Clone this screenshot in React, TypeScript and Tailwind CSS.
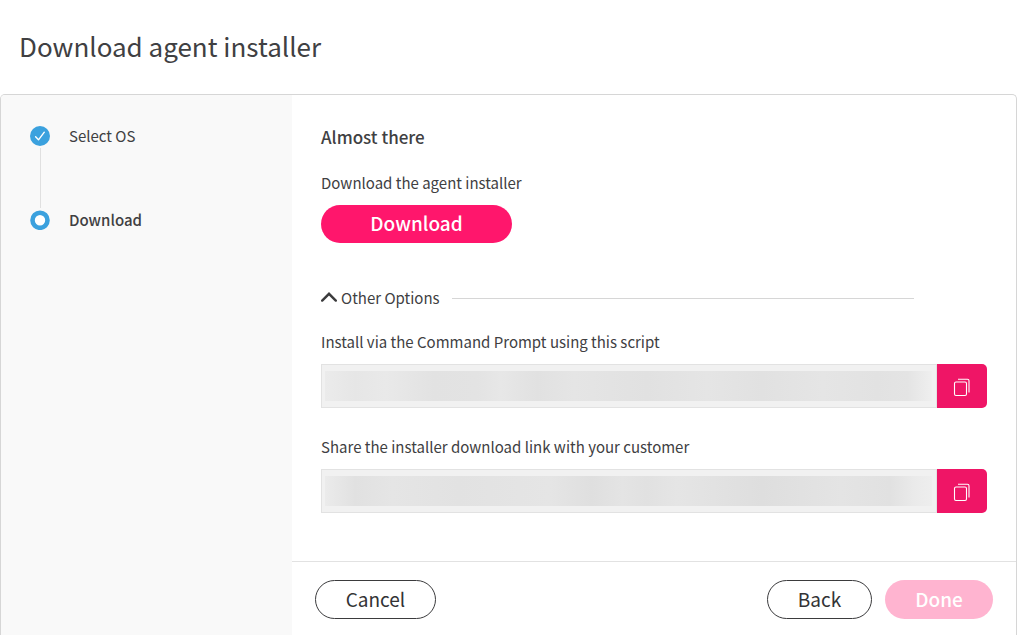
import { useId, useState } from "react";

function CheckBadge() {
  return (
    <svg viewBox="0 0 20 20" className="size-5 shrink-0" aria-hidden="true">
      <circle cx="10" cy="10" r="10" fill="#3ba1de" />
      <path d="M5.6 10.8 8.5 13.8 14.3 6.2" fill="none" stroke="#fff" strokeWidth="1.4" strokeLinecap="round" strokeLinejoin="round" />
    </svg>
  );
}

function CurrentBadge() {
  return (
    <svg viewBox="0 0 20 20" className="size-5 shrink-0" aria-hidden="true">
      <circle cx="10" cy="10.3" r="7.5" fill="#fff" stroke="#3ba1de" strokeWidth="4.6" />
    </svg>
  );
}

function CopyIcon() {
  return (
    <svg viewBox="0 0 18 20" className="h-5 w-[18px]" fill="none" stroke="#fff" aria-hidden="true">
      <rect x="1.5" y="5" width="12" height="13.5" rx="1.5" strokeWidth="1.1" />
      <path d="M5 2.2h9.5a1.5 1.5 0 0 1 1.5 1.5V15.5" strokeWidth="1.1" />
    </svg>
  );
}

function CopyField({ label, fill }: { label: string; fill: string }) {
  const id = useId();
  return (
    <div>
      <label htmlFor={id} className="block leading-6">
        {label}
      </label>
      <div className="mt-[10px] flex h-11">
        <div className="flex min-w-0 flex-1 items-center border border-[#e2e2e2] bg-[#f1f1f1] pr-1 pl-[3px]">
          <input id={id} readOnly className={`h-[30px] w-full outline-none ${fill}`} />
        </div>
        <button type="button" aria-label="Copy" className="flex w-[50px] items-center justify-center rounded-r-[5px] bg-[#ef1566] pt-[2px]">
          <CopyIcon />
        </button>
      </div>
    </div>
  );
}

export default function App() {
  const [open, setOpen] = useState(true);
  return (
    <div className="flex min-h-screen flex-col bg-white font-['Noto_Sans_CJK_SC',sans-serif] text-[15px] text-[#404042]">
      <header className="flex h-[94px] items-center px-[19px] pb-[2px]">
        <h1 className="text-[26px] leading-8 font-normal">Download agent installer</h1>
      </header>

      <div className="flex flex-1 rounded-t-[5px] border-x border-t border-[#d6d6d6]">
        <aside className="w-[291px] shrink-0 rounded-tl bg-[#f9f9f9] pt-[29px] pl-[29px]">
          <ol>
            <li>
              <div className="flex items-center gap-[19px] leading-6">
                <CheckBadge />
                <span>Select OS</span>
              </div>
              <div className="ml-[10px] h-[60px] w-px bg-[#e0e0e0]" />
            </li>
            <li className="flex items-center gap-[19px] leading-6 font-medium" aria-current="step">
              <CurrentBadge />
              <span>Download</span>
            </li>
          </ol>
        </aside>

        <div className="flex min-w-0 flex-1 flex-col">
          <main className="flex-1 px-[29px] pt-[30px] pb-12">
            <h2 className="text-[17px] leading-6 font-medium">Almost there</h2>
            <p className="mt-[22px] leading-6">Download the agent installer</p>
            <button type="button" className="mt-[10px] flex h-[38px] w-[191px] items-center justify-center rounded-full bg-[#ff166c] pb-[2px] text-[19px] leading-6 font-medium text-white">
              Download
            </button>

            <div className="mt-[43px] flex items-center gap-3 pr-[73px]">
              <button type="button" aria-expanded={open} onClick={() => setOpen(!open)} className="flex items-center gap-1 leading-6">
                <svg viewBox="0 0 16 12" className={`h-3 w-4 ${open ? "" : "rotate-180"}`} fill="none" stroke="#3b3b3d" strokeWidth="2.4" aria-hidden="true">
                  <path d="M1.2 8.6 8 1.8 14.8 8.6" strokeLinecap="round" />
                </svg>
                Other Options
              </button>
              <div className="h-px flex-1 bg-[#d6d6d6]" />
            </div>

            {open && (
              <div className="mt-5 flex flex-col gap-[27px]">
                <CopyField
                  label="Install via the Command Prompt using this script"
                  fill="bg-[linear-gradient(90deg,#ebebeb_0%,#e6e6e6_5%,#e9e9e9_10%,#e2e2e2_18%,#e3e3e3_25%,#e7e7e7_29%,#e1e1e1_35%,#e5e5e5_41%,#e1e1e1_53%,#e5e5e5_63%,#e1e1e1_72%,#e5e5e5_82%,#e2e2e2_91%,#e4e4e4_96%,#efefef_100%)]"
                />
                <CopyField
                  label="Share the installer download link with your customer"
                  fill="bg-[linear-gradient(90deg,#ebebeb_0%,#e1e1e1_5%,#e5e5e5_11%,#e2e2e2_22%,#e5e5e5_37%,#dfdfdf_44%,#e4e4e4_49%,#e1e1e1_53%,#e5e5e5_58%,#dedede_72%,#e4e4e4_85%,#e1e1e1_93%,#eaeaea_97%,#eeeeee_100%)]"
                />
              </div>
            )}
          </main>

          <footer className="flex h-[74px] items-start justify-between border-t border-[#e2e2e2] px-[23px] pt-[18px] text-[19px] leading-6">
            <button type="button" className="h-[39px] w-[121px] rounded-full border border-[#3b3b3d] pb-[2px] text-[#333335]">
              Cancel
            </button>
            <div className="flex gap-[13px]">
              <button type="button" className="h-[39px] w-[105px] rounded-full border border-[#3b3b3d] pb-[2px] text-[#333335]">
                Back
              </button>
              <button type="button" disabled className="h-[39px] w-[108px] rounded-full bg-[#ffb4d0] pb-[2px] font-medium text-white">
                Done
              </button>
            </div>
          </footer>
        </div>
      </div>
    </div>
  );
}
